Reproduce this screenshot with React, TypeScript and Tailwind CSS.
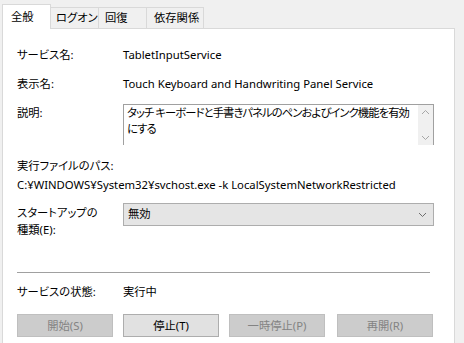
import React from 'react';

const font = "font-['Noto_Sans','Noto_Sans_CJK_JP',sans-serif] [font-feature-settings:'palt']";

function Btn({ label, enabled }: { label: string; enabled?: boolean }) {
  return (
    <div
      className={`flex h-[23px] w-[96px] items-center justify-center border leading-[16px] ${
        enabled ? 'border-[#adadad] bg-[#e1e1e1] text-black' : 'border-[#bfbfbf] bg-[#cccccc] text-[#838383]'
      }`}
    >
      {label}
    </div>
  );
}

const chevronDown = (
  <svg width="9" height="6" viewBox="0 0 9 6"><path d="M1 1 L4.5 4.5 L8 1" fill="none" stroke="currentColor" strokeWidth="1" /></svg>
);

export default function App() {
  return (
    <div className={`h-[343px] w-[464px] overflow-hidden bg-[#f0f0f0] text-[11.3px] text-black ${font}`}>
      {/* タブ */}
      <div className="flex h-[28px] items-end pl-[2px] whitespace-nowrap">
        <div className="relative z-10 -mb-px h-[25px] w-[49px] border border-b-0 border-[#d9d9d9] bg-white pl-[8px] pt-[4px] leading-[16px]">
          全般
        </div>
        <div className="h-[21px] w-[48px] border border-b-0 border-l-0 border-[#d9d9d9] pl-[5px] pt-[2px] leading-[16px]">ログオン</div>
        <div className="h-[21px] w-[48px] border border-b-0 border-l-0 border-[#d9d9d9] pl-[6px] pt-[2px] leading-[16px]">回復</div>
        <div className="h-[21px] w-[57px] border border-b-0 border-l-0 border-[#d9d9d9] pl-[7px] pt-[2px] leading-[16px]">依存関係</div>
      </div>

      {/* パネル */}
      <div className="ml-[2px] h-[320px] w-[453px] border border-[#d9d9d9] bg-white pl-[14px] pt-[18px]">
        <div className="flex leading-[16px]">
          <div className="w-[106px]">サービス名:</div>
          <div>TabletInputService</div>
        </div>
        <div className="mt-[13px] flex leading-[16px]">
          <div className="w-[106px]">表示名:</div>
          <div>Touch Keyboard and Handwriting Panel Service</div>
        </div>
        <div className="mt-[12px] flex">
          <div className="w-[106px] pt-[1px] leading-[16px]">説明:</div>
          <div className="flex h-[41px] w-[311px] border-l border-t border-r border-[#a0a0a0]">
            <div className="flex-1 pl-[3px] leading-[16px] tracking-[-0.9px]">
              タッチ キーボードと手書きパネルのペンおよびインク機能を有効にする
            </div>
            <div className="flex w-[15px] flex-col items-center justify-between bg-[#f0f0f0] py-[4px] text-[#a6a6a6]">
              <svg width="9" height="6" viewBox="0 0 9 6"><path d="M1 5 L4.5 1.5 L8 5" fill="none" stroke="currentColor" strokeWidth="1" /></svg>
              {chevronDown}
            </div>
          </div>
        </div>
        <div className="mt-[13px] leading-[16px]">実行ファイルのパス:</div>
        <div className="mt-[3px] leading-[16px]">C:¥WINDOWS¥System32¥svchost.exe -k LocalSystemNetworkRestricted</div>
        <div className="mt-[10px] flex">
          <div className="w-[106px] pt-[1px] leading-[17px]">
            <div>スタートアップの</div>
            <div>種類(E):</div>
          </div>
          <div className="flex h-[23px] w-[311px] items-center justify-between border border-[#adadad] bg-[#e5e5e5] pl-[4px] pr-[6px]">
            <span>無効</span>
            <span className="text-[#6e6e6e]">{chevronDown}</span>
          </div>
        </div>
        <div className="mt-[34px] h-px w-[413px] bg-[#a0a0a0]" />
        <div className="mt-[11px] flex leading-[16px]">
          <div className="w-[106px]">サービスの状態:</div>
          <div>実行中</div>
        </div>
        <div className="mt-[14px] flex gap-[10px]">
          <Btn label="開始(S)" />
          <Btn label="停止(T)" enabled />
          <Btn label="一時停止(P)" />
          <div className="ml-[2px]"><Btn label="再開(R)" /></div>
        </div>
      </div>
    </div>
  );
}
